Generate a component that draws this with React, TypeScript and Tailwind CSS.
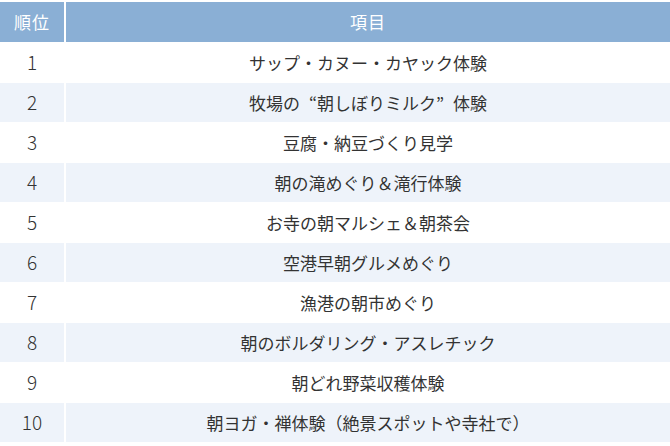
import React from "react";

const Q1 = () => <span className="inline-block w-[1em] text-right">“</span>;
const Q2 = () => <span className="inline-block w-[1em] text-left">”</span>;

const items: React.ReactNode[] = [
  "サップ・カヌー・カヤック体験",
  <>牧場の<Q1 />朝しぼりミルク<Q2 />体験</>,
  "豆腐・納豆づくり見学",
  "朝の滝めぐり＆滝行体験",
  "お寺の朝マルシェ＆朝茶会",
  "空港早朝グルメめぐり",
  "漁港の朝市めぐり",
  "朝のボルダリング・アスレチック",
  "朝どれ野菜収穫体験",
  "朝ヨガ・禅体験（絶景スポットや寺社で）",
];

export default function App() {
  return (
    <div
      className="w-[670px] h-[446px] bg-white pt-[2px] flex flex-col gap-y-[1px]"
      style={{ fontFamily: '"Noto Sans CJK JP", "Noto Sans", sans-serif' }}
    >
      <div className="grid grid-cols-[64px_1fr] gap-x-[2px] h-[40px] text-white text-[17px]">
        <div className="bg-[#8aafd5] flex items-center justify-center tracking-[1px]">順位</div>
        <div className="bg-[#8aafd5] flex items-center justify-center tracking-[1px]">項目</div>
      </div>
      {items.map((t, i) => {
        const bg = i % 2 === 1 ? "bg-[#eef3fa]" : "bg-white";
        return (
          <div
            key={i}
            className="grid grid-cols-[64px_1fr] gap-x-[2px] h-[39px] text-[#333333]"
          >
            <div className={`${bg} flex items-center justify-center text-[19px] font-light`}>
              {i + 1}
            </div>
            <div className={`${bg} flex items-center justify-center text-[17px]`}>{t}</div>
          </div>
        );
      })}
    </div>
  );
}
